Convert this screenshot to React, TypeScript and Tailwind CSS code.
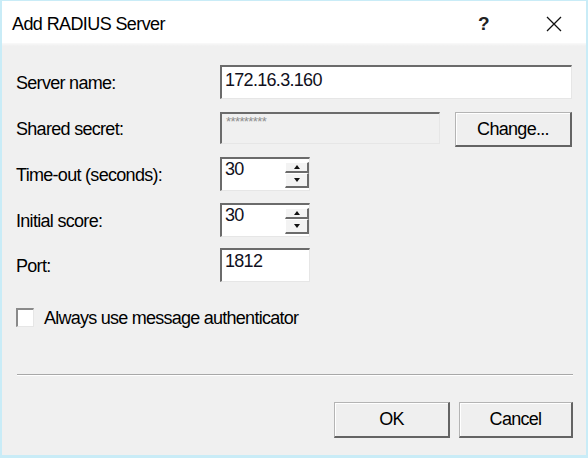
import React from "react";

const font = { fontFamily: '"Liberation Sans", Arial, sans-serif' };

function SunkenBox({
  width,
  disabled,
  children,
  className = "",
}: {
  width: string;
  disabled?: boolean;
  children?: React.ReactNode;
  className?: string;
}) {
  return (
    <div
      className={`${width} ${className} flex border-t-2 border-l-2 border-r border-b border-t-[#6b6b6b] border-l-[#6b6b6b] border-r-[#e6e6e6] border-b-[#e6e6e6] ${
        disabled ? "bg-[#f0f0f0]" : "bg-white"
      }`}
    >
      {children}
    </div>
  );
}

function Button({ label, width }: { label: string; width: string }) {
  return (
    <div
      className={`${width} h-full flex items-center justify-center bg-[#efefef] border-t border-l border-t-[#b4b4b4] border-l-[#b4b4b4] border-r-2 border-b-2 border-r-[#646464] border-b-[#646464] shadow-[inset_1px_1px_0_#ffffff] text-[18px] tracking-[-0.7px] text-black`}
    >
      {label}
    </div>
  );
}

function Spinner({ value }: { value: string }) {
  return (
    <SunkenBox width="w-[90px]" className="h-[34px] items-start justify-between">
      <span className="pl-[3px] pt-[0px] leading-[20px] text-[18px] tracking-[-0.7px] text-[#101020]">
        {value}
      </span>
      <div className="mt-[3px] flex flex-col w-[24px]">
        <div className="h-[11px] flex items-center justify-center bg-[#f3f3f3] border-t border-l border-t-white border-l-white border-r-2 border-b-2 border-r-[#6b6b6b] border-b-[#6b6b6b]">
          <svg width="6" height="4" viewBox="0 0 6 4">
            <path d="M3 0 L6 4 L0 4 Z" fill="#111" />
          </svg>
        </div>
        <div className="h-[15px] flex items-center justify-center bg-[#f3f3f3] border-t border-l border-t-white border-l-white border-r-2 border-b-2 border-r-[#6b6b6b] border-b-[#6b6b6b]">
          <svg width="6" height="4" viewBox="0 0 6 4">
            <path d="M0 0 L6 0 L3 4 Z" fill="#111" />
          </svg>
        </div>
      </div>
    </SunkenBox>
  );
}

function Label({ text }: { text: string }) {
  return (
    <div className="w-[204px] shrink-0 pt-[2px] text-[18px] tracking-[-0.7px] text-black">
      {text}
    </div>
  );
}

export default function App() {
  return (
    <div
      style={font}
      className="w-[588px] h-[458px] flex flex-col bg-[#f0f0f0] border-l-2 border-r-2 border-t border-b-[3px] border-[#c9ecf7] overflow-hidden"
    >
      {/* Title bar */}
      <div className="h-[42px] shrink-0 bg-white flex items-center pl-[10px] pr-[24px] text-black">
        <div className="flex-1 pt-[5px] text-[18px] tracking-[-0.6px]">Add RADIUS Server</div>
        <div className="pt-[4px] w-[20px] text-[19px] font-bold text-[#222]">?</div>
        <div className="ml-[48px] pt-[3px]">
          <svg width="16" height="16" viewBox="0 0 16 16">
            <path d="M1 1 L15 15 M15 1 L1 15" stroke="#111" strokeWidth="1.3" />
          </svg>
        </div>
      </div>
      <div className="h-[3px] shrink-0 bg-gradient-to-b from-[#fafafa] to-[#f0f0f0]" />

      {/* Body */}
      <div className="flex-1 flex flex-col pl-[14px] pr-[14px] pt-[19px]">
        {/* Server name */}
        <div className="flex items-center h-[34px]">
          <Label text="Server name:" />
          <SunkenBox width="w-[352px]" className="h-[34px] items-start">
            <span className="pl-[3px] pt-[3px] leading-[20px] text-[18px] tracking-[-0.7px] text-[#101020]">
              172.16.3.160
            </span>
          </SunkenBox>
        </div>

        {/* Shared secret */}
        <div className="flex items-start h-[35px] mt-[13px]">
          <div className="h-[32px] flex items-center">
            <Label text="Shared secret:" />
          </div>
          <SunkenBox width="w-[222px]" disabled className="h-[32px] items-start">
            <span className="pl-[4px] pt-[2px] leading-[12px] text-[13px] tracking-[-0.6px] text-[#8e8e8e]">
              *********
            </span>
          </SunkenBox>
          <div className="ml-[15px] h-[35px]">
            <Button label="Change..." width="w-[117px]" />
          </div>
        </div>

        {/* Time-out */}
        <div className="flex items-center h-[34px] mt-[10px]">
          <Label text="Time-out (seconds):" />
          <Spinner value="30" />
        </div>

        {/* Initial score */}
        <div className="flex items-center h-[34px] mt-[12px]">
          <Label text="Initial score:" />
          <Spinner value="30" />
        </div>

        {/* Port */}
        <div className="flex items-center h-[34px] mt-[11px]">
          <Label text="Port:" />
          <SunkenBox width="w-[90px]" className="h-[34px] items-start">
            <span className="pl-[3px] pt-[1px] leading-[20px] text-[18px] tracking-[-0.7px] text-[#101020]">
              1812
            </span>
          </SunkenBox>
        </div>

        {/* Checkbox */}
        <div className="flex items-center h-[20px] mt-[25px]">
          <div className="w-[18px] h-[19px] bg-white border-t-2 border-l-2 border-r border-b border-t-[#8a8a8a] border-l-[#8a8a8a] border-r-[#e6e6e6] border-b-[#e6e6e6]" />
          <div className="ml-[10px] pt-[2px] text-[18px] tracking-[-0.75px] text-black">
            Always use message authenticator
          </div>
        </div>

        {/* Separator */}
        <div className="mt-[47px] ml-[1px] mr-[-1px] h-[2px] bg-[#a8a8a8] border-b border-white" />

        {/* Buttons */}
        <div className="flex justify-end h-[36px] mt-[26px] mr-[-1px] gap-[9px]">
          <Button label="OK" width="w-[116px]" />
          <Button label="Cancel" width="w-[114px]" />
        </div>
      </div>
    </div>
  );
}
